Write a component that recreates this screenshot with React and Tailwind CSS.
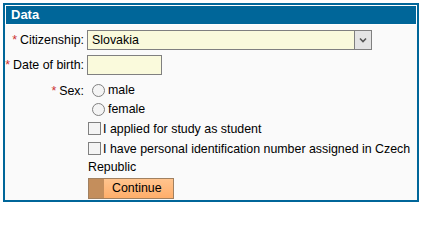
import React, { useState } from "react";

const Star = () => <span className="text-[#cc3333] mr-[3px]">*</span>;

const Radio = ({ checked, onClick, label }) => (
  <label onClick={onClick} className="flex items-center h-[19px] cursor-pointer">
    <span className="ml-[5px] w-[13px] h-[13px] rounded-full border border-[#808080] bg-[#f4f4f4] flex items-center justify-center">
      {checked && <span className="w-[5px] h-[5px] rounded-full bg-[#333]" />}
    </span>
    <span className="ml-[3px]">{label}</span>
  </label>
);

const Check = ({ checked, onClick, children }) => (
  <div onClick={onClick} className="cursor-pointer leading-[18px]">
    <span className="inline-block align-[-2px] w-[13px] h-[13px] border border-[#808080] bg-[#f4f4f4] mr-[2px]">
      {checked && <span className="block text-[10px] leading-[11px] text-center">✓</span>}
    </span>
    {children}
  </div>
);

export default function App() {
  let [sex, setSex] = useState("");
  let [student, setStudent] = useState(false);
  let [pin, setPin] = useState(false);

  return (
    <div
      className="w-[423px] h-[207px] bg-white pt-[3px] pl-[3px] text-[12.4px] text-black"
      style={{ fontFamily: '"Liberation Sans", Arial, sans-serif' }}
    >
      <section className="w-[416px] h-[199px] border-2 border-[#006699] bg-[#fafafa]">
        <div className="bg-white p-px">
          <header className="h-[18px] bg-[#006699] pl-[5px] text-white font-bold text-[13px] leading-[18px]">
            Data
          </header>
        </div>

        <form className="flex flex-col pt-[5px]" onSubmit={(e) => e.preventDefault()}>
          <div className="flex items-center h-[20px]">
            <div className="w-[80px] text-right pr-[1px] whitespace-nowrap">
              <Star />
              Citizenship:
            </div>
            <div className="ml-[2px] w-[285px] h-[20px] border border-[#808080] bg-[#fafadc] flex items-center">
              <span className="flex-1 pl-[4px]">Slovakia</span>
              <span className="w-[17px] h-[18px] border-l border-[#808080] bg-[#e4e4e4] flex items-center justify-center">
                <svg width="8" height="6" viewBox="0 0 8 6">
                  <path d="M1 1.5 L4 4.5 L7 1.5" fill="none" stroke="#555" strokeWidth="1.6" />
                </svg>
              </span>
            </div>
          </div>

          <div className="flex items-center h-[20px] mt-[5px]">
            <div className="w-[80px] text-right pr-[1px] whitespace-nowrap">
              <Star />
              Date of birth:
            </div>
            <input className="ml-[2px] w-[75px] h-[20px] border border-[#808080] bg-[#fafadc] outline-none px-1" />
          </div>

          <div className="flex mt-[6px]">
            <div className="w-[80px] text-right pr-[1px] leading-[19px] pt-px">
              <Star />
              Sex:
            </div>
            <div className="ml-[2px] flex flex-col">
              <Radio label="male" checked={sex === "m"} onClick={() => setSex("m")} />
              <Radio label="female" checked={sex === "f"} onClick={() => setSex("f")} />
            </div>
          </div>

          <div className="ml-[83px] mt-px w-[325px]">
            <Check checked={student} onClick={() => setStudent(!student)}>
              I applied for study as student
            </Check>
            <div className="mt-[2px]">
              <Check checked={pin} onClick={() => setPin(!pin)}>
                I have personal identification number assigned in Czech Republic
              </Check>
            </div>
            <button className="mt-[2px] w-[86px] h-[21px] border border-[#a08060] flex cursor-pointer">
              <span className="w-[15px] h-full bg-[#c48e5c]" />
              <span className="flex-1 h-full bg-gradient-to-b from-[#ffc48e] to-[#ffae6a] leading-[19px] text-left pl-[8px]">
                Continue
              </span>
            </button>
          </div>
        </form>
      </section>
    </div>
  );
}
